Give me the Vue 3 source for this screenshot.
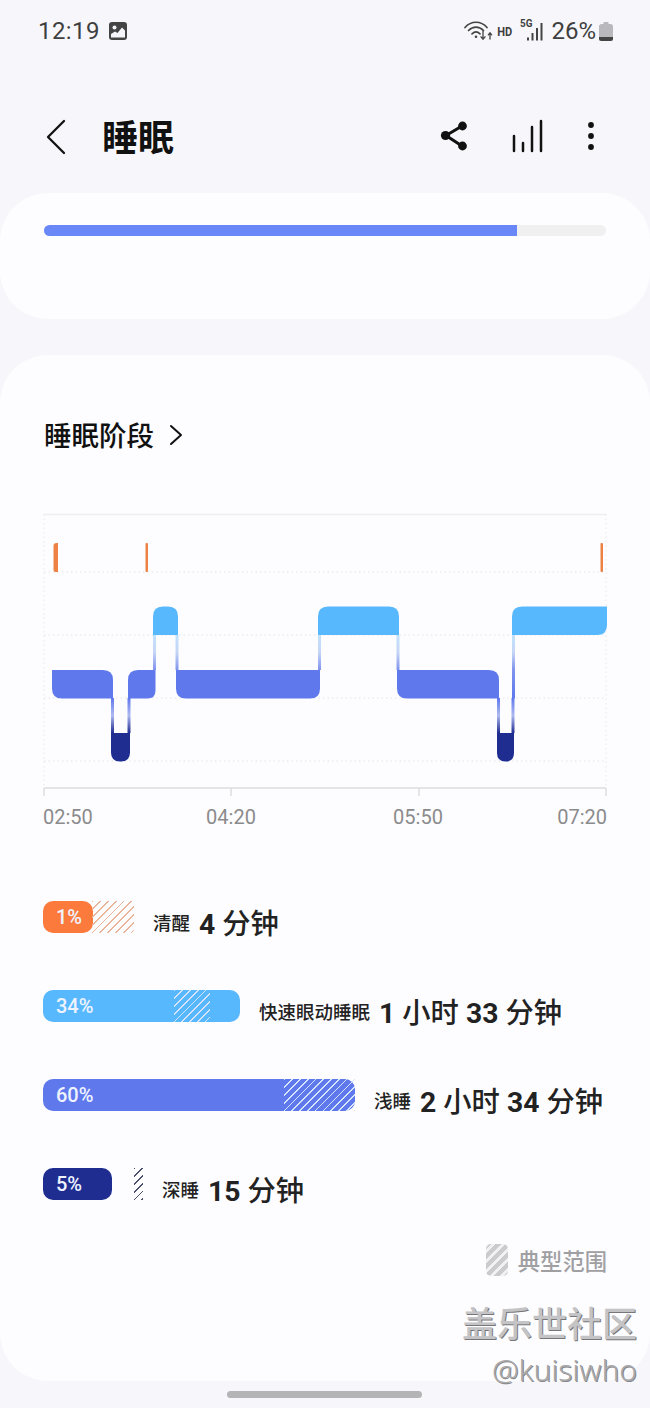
<script setup>
const grid = [572, 635, 698, 761]
const ticks = [44, 231, 419, 606]

const BLUE = '#5f78ec'
const SKY = '#58b8fe'
const DEEP = '#1f2d91'

function rr(x, y, w, h, tl, tr, br, bl) {
  return `M${x + tl} ${y}H${x + w - tr}Q${x + w} ${y} ${x + w} ${y + tr}V${y + h - br}Q${x + w} ${y + h} ${x + w - br} ${y + h}H${x + bl}Q${x} ${y + h} ${x} ${y + h - bl}V${y + tl}Q${x} ${y} ${x + tl} ${y}Z`
}

const segments = [
  { d: rr(53.5, 543, 4.5, 29, 3, 0, 0, 2), fill: '#ee8245' },
  { d: rr(145.5, 543, 2.5, 29, 1, 1, 1, 1), fill: '#ee8245' },
  { d: rr(600.5, 543, 2.5, 29, 1, 1, 1, 1), fill: '#ee8245' },
  { d: rr(52, 670, 61, 28.5, 0, 10, 0, 10), fill: BLUE },
  { d: rr(128, 670, 27.5, 28.5, 10, 0, 8, 0), fill: BLUE },
  { d: rr(176, 670, 144, 28.5, 0, 0, 10, 10), fill: BLUE },
  { d: rr(397, 670, 102, 28.5, 0, 10, 0, 10), fill: BLUE },
  { d: rr(153, 606.5, 25, 28.5, 10, 10, 0, 0), fill: SKY },
  { d: rr(318, 606.5, 81, 28.5, 10, 10, 0, 0), fill: SKY },
  { d: rr(512, 606.5, 95, 28.5, 10, 0, 10, 0), fill: SKY },
  { d: rr(111, 733, 19, 28.5, 0, 0, 9, 9), fill: DEEP },
  { d: rr(497, 733, 17, 28.5, 0, 0, 8.5, 8.5), fill: DEEP },
]

const links = [
  { x: 153, y: 635, h: 35, g: 'skyBlue' },
  { x: 175.5, y: 635, h: 35, g: 'skyBlue' },
  { x: 318, y: 635, h: 35, g: 'skyBlue' },
  { x: 396.5, y: 635, h: 35, g: 'skyBlue' },
  { x: 512, y: 635, h: 35, g: 'skyBlue' },
  { x: 512, y: 670, h: 28.5, g: 'solidBlue' },
  { x: 111, y: 698, h: 35, g: 'blueDeep' },
  { x: 127.5, y: 698, h: 35, g: 'blueDeep' },
  { x: 497, y: 698, h: 35, g: 'blueDeep' },
  { x: 511.5, y: 698, h: 35, g: 'blueDeep' },
]

const axisLabels = [
  { t: '02:50', x: 43, a: 'start' },
  { t: '04:20', x: 231, a: 'middle' },
  { t: '05:50', x: 418, a: 'middle' },
  { t: '07:20', x: 607, a: 'end' },
]

const rows = [
  { pct: '1%', label: '清醒', width: 50, from: 49, to: 91, color: '#fb7a3c', kind: 'orange', value: [['4', 1], [' 分钟', 0]] },
  { pct: '34%', label: '快速眼动睡眠', width: 197, from: 131, to: 167, color: '#58b8fe', kind: 'light', value: [['1', 1], [' 小时 ', 0], ['33', 1], [' 分钟', 0]] },
  { pct: '60%', label: '浅睡', width: 312, from: 241, to: 312, color: '#5f78ec', kind: 'light', value: [['2', 1], [' 小时 ', 0], ['34', 1], [' 分钟', 0]] },
  { pct: '5%', label: '深睡', width: 69, from: 91, to: 100, color: '#1f2d91', kind: 'dark', value: [['15', 1], [' 分钟', 0]] },
]
</script>

<template>
  <div class="page">
    <div class="status">
      <span class="time">12:19</span>
      <svg class="pic" width="18" height="18" viewBox="0 0 18 18">
        <rect width="18" height="18" rx="3" fill="#444" />
        <circle cx="5.5" cy="5.5" r="2" fill="#f6f6fa" />
        <path d="M2 15.5V12l4-2.5 2.5 1.5L13 5.5l3 3v7z" fill="#f6f6fa" />
      </svg>
      <span class="grow"></span>
      <svg class="wifi" width="29" height="20" viewBox="0 0 29 20" fill="none" stroke="#444" stroke-width="1.700" stroke-linecap="round">
        <path d="M1 6.500C7-.5 17-.5 23 6.500" />
        <path d="M4.500 9.500c4.500-4.500 10.500-4.500 15 0" />
        <path d="M8 12.800c2.500-2.300 5.500-2.300 8 0" />
        <circle cx="12" cy="15.800" r="1.300" fill="#444" stroke="none" />
        <path d="M19 10v8M17 15.800l2 2.400 2-2.400" stroke-width="1.300" />
        <path d="M26 18v-6M24.300 13.800l1.700-2 1.700 2" stroke-width="1.300" />
      </svg>
      <span class="hd">HD</span>
      <span class="signal">
        <span class="five">5G</span>
        <svg width="19" height="18" viewBox="0 0 19 18" fill="#444">
          <rect x="1" y="14.500" width="2" height="3" />
          <rect x="5.500" y="10" width="2" height="7.500" />
          <rect x="10" y="5" width="2" height="12.500" />
          <rect x="14.500" y="0" width="2" height="17.500" />
        </svg>
      </span>
      <span class="pct">26%</span>
      <svg class="batt" width="14" height="19" viewBox="0 0 14 19">
        <path d="M4.500 0h5v2H4.500z" fill="#b9b9bd" />
        <rect y="2" width="14" height="17" rx="2.500" fill="#b9b9bd" />
        <path d="M0 15h14v1.500a2.500 2.500 0 0 1-2.500 2.500h-9A2.500 2.500 0 0 1 0 16.500z" fill="#444" />
      </svg>
    </div>

    <div class="header">
      <svg class="back" width="24" height="36" viewBox="0 0 24 36" fill="none" stroke="#111" stroke-width="2.300" stroke-linecap="round" stroke-linejoin="round">
        <path d="M20 2 4 18l16 16" />
      </svg>
      <h1 class="title">睡眠</h1>
      <span class="grow"></span>
      <svg class="share" width="30" height="32" viewBox="0 0 30 32" fill="#111" stroke="#111">
        <path d="M23 6 7 15.500 23 26" fill="none" stroke-width="3" />
        <circle cx="6.500" cy="15.500" r="4.600" stroke="none" />
        <circle cx="23.500" cy="6" r="4.400" stroke="none" />
        <circle cx="23.500" cy="26" r="4.400" stroke="none" />
      </svg>
      <svg class="levels" width="32" height="36" viewBox="0 0 32 36" fill="none" stroke="#111" stroke-width="2.500" stroke-linecap="round">
        <path d="M3 18v15M12 25v8M21 9v24M30 3v30" />
      </svg>
      <svg class="more" width="20" height="32" viewBox="0 0 20 32" fill="#111">
        <circle cx="10" cy="5" r="2.900" />
        <circle cx="10" cy="16" r="2.900" />
        <circle cx="10" cy="27" r="2.900" />
      </svg>
    </div>

    <section class="card top-card">
      <div class="progress"><div class="progress-fill"></div></div>
    </section>

    <section class="card stage-card">
      <div class="stage-title">
        <h2>睡眠阶段</h2>
        <svg width="16" height="24" viewBox="0 0 16 24" fill="none" stroke="#111" stroke-width="2" stroke-linecap="round" stroke-linejoin="round">
          <path d="M3 3l10 9-10 9" />
        </svg>
      </div>

      <svg class="chart" width="564" height="320" viewBox="43 510 564 320">
        <defs>
          <linearGradient id="skyBlue" x1="0" y1="0" x2="0" y2="1">
            <stop offset="0" stop-color="#c2e2fc" />
            <stop offset="0.5" stop-color="#c5d5f6" />
            <stop offset="1" stop-color="#7f93ee" />
          </linearGradient>
          <linearGradient id="blueDeep" x1="0" y1="0" x2="0" y2="1">
            <stop offset="0" stop-color="#5f78ec" />
            <stop offset="0.5" stop-color="#aebaf0" />
            <stop offset="1" stop-color="#1f2d91" />
          </linearGradient>
          <linearGradient id="solidBlue" x1="0" y1="0" x2="0" y2="1">
            <stop offset="0" stop-color="#7f93ee" />
            <stop offset="1" stop-color="#5f78ec" />
          </linearGradient>
        </defs>
        <line x1="44" y1="514.500" x2="606" y2="514.500" stroke="#eeeeef" stroke-width="1.500" />
        <line v-for="y in grid" :key="y" x1="44" :y1="y" x2="606" :y2="y" stroke="#e4e4e8" stroke-width="1" stroke-dasharray="1.500 3" />
        <line x1="44" y1="514" x2="44" y2="788" stroke="#e8e8ec" stroke-dasharray="1.500 3" />
        <line x1="606" y1="514" x2="606" y2="788" stroke="#e8e8ec" stroke-dasharray="1.500 3" />
        <rect v-for="(l, i) in links" :key="'l' + i" :x="l.x" :y="l.y" width="3" :height="l.h" :fill="`url(#${l.g})`" />
        <path v-for="(s, i) in segments" :key="'s' + i" :d="s.d" :fill="s.fill" />
        <line x1="44" y1="788" x2="606" y2="788" stroke="#dcdcde" stroke-width="1.500" />
        <line v-for="x in ticks" :key="x" :x1="x" y1="788" :x2="x" y2="796" stroke="#dcdcde" stroke-width="1.500" />
        <text v-for="a in axisLabels" :key="a.t" class="axis" :x="a.x" y="824" :text-anchor="a.a">{{ a.t }}</text>
      </svg>

      <div class="legend">
        <div v-for="r in rows" :key="r.label" class="row">
          <div class="track" :style="{ width: Math.max(r.to, r.width) + 'px' }">
            <div class="fill" :style="{ width: r.width + 'px', background: r.color }">{{ r.pct }}</div>
            <div class="hatch" :class="r.kind" :style="{ left: r.from + 'px', width: r.to - r.from + 'px' }"></div>
          </div>
          <div class="text">
            <span class="label">{{ r.label }}</span>
            <span class="value"><span v-for="(p, i) in r.value" :key="i" :class="{ num: p[1] }">{{ p[0] }}</span></span>
          </div>
        </div>
      </div>

      <div class="typical">
        <span class="typical-icon"></span>
        <span>典型范围</span>
      </div>
    </section>

    <div class="nav"></div>

    <div class="mark">
      <div class="mark-a">盖乐世社区</div>
      <div class="mark-b">@kuisiwho</div>
    </div>
  </div>
</template>

<style scoped>
.page {
  position: relative;
  width: 650px;
  height: 1408px;
  overflow: hidden;
  background: #f7f7fb;
  font-family: Roboto, "Noto Sans CJK SC", sans-serif;
  color: #222;
}
.grow { flex: 1; }

.status {
  display: flex;
  align-items: center;
  height: 62px;
  padding: 0 37px 0 38px;
  color: #3f3f3f;
}
.time { font-size: 24px; letter-spacing: 0.4px; }
.pic { margin-left: 9px; }
.wifi { margin-right: 3px; }
.hd { font-size: 13px; font-weight: 700; margin-right: 7px; transform: scaleX(0.85); }
.signal { position: relative; display: flex; margin-right: 6px; padding-left: 6px; padding-top: 2px; }
.five { position: absolute; left: 0; top: -4px; font-size: 11px; font-weight: 700; transform: scaleX(0.9); transform-origin: left; }
.pct { font-size: 24px; margin-right: 3px; }

.header {
  display: flex;
  align-items: center;
  height: 38px;
  padding: 56px 48px 37px 44px;
}
.title {
  margin: 4px 0 0 34px;
  font-size: 36px;
  font-weight: 700;
  line-height: 38px;
  color: #111;
}
.share { margin: -3px 2px 0 -2px; }
.levels { margin: -3px 38px 0 40px; }
.more { margin-top: -3px; margin-right: 1px; }

.card {
  background: #fdfdff;
  border-radius: 48px;
}
.top-card {
  height: 94px;
  padding: 32px 44px 0;
  margin-bottom: 36px;
}
.progress {
  height: 11px;
  border-radius: 6px;
  background: #f0f0f0;
  overflow: hidden;
}
.progress-fill {
  width: 84.200%;
  height: 100%;
  background: #6a87f8;
}

.stage-card {
  height: 961px;
  padding: 65px 43px 0;
}
.stage-title {
  display: flex;
  align-items: center;
  gap: 14px;
  height: 30px;
  padding-left: 1px;
}
.stage-title h2 {
  margin: 4px 0 0;
  font-size: 27.500px;
  font-weight: 500;
  line-height: 30px;
  color: #111;
}
.chart {
  display: block;
  margin-top: 60px;
}
.axis {
  font-family: Roboto, sans-serif;
  font-size: 20px;
  fill: #8b8b8d;
}

.legend {
  display: flex;
  flex-direction: column;
  gap: 57px;
  margin-top: 71px;
}
.row {
  display: flex;
  height: 32px;
  gap: 19px;
}
.track {
  position: relative;
  height: 32px;
  flex: none;
}
.fill {
  height: 32px;
  border-radius: 10px;
  padding-left: 13px;
  box-sizing: border-box;
  font-size: 20px;
  font-weight: 500;
  line-height: 32px;
  color: #eef3ff;
}
.hatch {
  position: absolute;
  top: 0;
  height: 32px;
}
.hatch.orange {
  background: repeating-linear-gradient(135deg, #e9b49a 0 1.300px, transparent 1.300px 5.500px);
}
.hatch.light {
  background: repeating-linear-gradient(135deg, #d6e4fb 0 1.200px, transparent 1.200px 5.500px);
}
.hatch.dark {
  background: repeating-linear-gradient(135deg, #4a4f6c 0 1.300px, transparent 1.300px 5.500px);
}
.text {
  display: flex;
  align-items: center;
  gap: 9px;
  height: 32px;
  margin-top: 7px;
  white-space: nowrap;
  line-height: 32px;
}
.label {
  font-size: 18.500px;
  font-weight: 500;
}
.value {
  margin-top: 2px;
  font-size: 28.300px;
  font-weight: 500;
}
.num { font-weight: 700; }

.typical {
  display: flex;
  align-items: center;
  justify-content: flex-end;
  gap: 10px;
  height: 32px;
  margin-top: 44px;
  font-size: 22.300px;
  font-weight: 500;
  color: #a0a0a3;
}
.typical-icon {
  width: 22px;
  height: 32px;
  border-radius: 5px;
  background: repeating-linear-gradient(135deg, #cbcbce 0 4px, #f1f1f3 4px 7px);
}

.nav {
  position: absolute;
  left: 227px;
  top: 1391px;
  width: 195px;
  height: 7px;
  border-radius: 4px;
  background: #b4b4b6;
}
.mark {
  position: absolute;
  right: 13px;
  top: 1304px;
  text-align: right;
}
.mark-a {
  font-size: 35px;
  font-weight: 500;
  line-height: 44px;
  color: #c4c4c6;
  text-shadow: 1px 1px 0 #77777a;
}
.mark-b {
  font-family: "Noto Sans", sans-serif;
  font-size: 30px;
  font-weight: 300;
  line-height: 44px;
  color: #a8a8aa;
  text-shadow: 1px 1px 0 #88888a;
}
</style>
